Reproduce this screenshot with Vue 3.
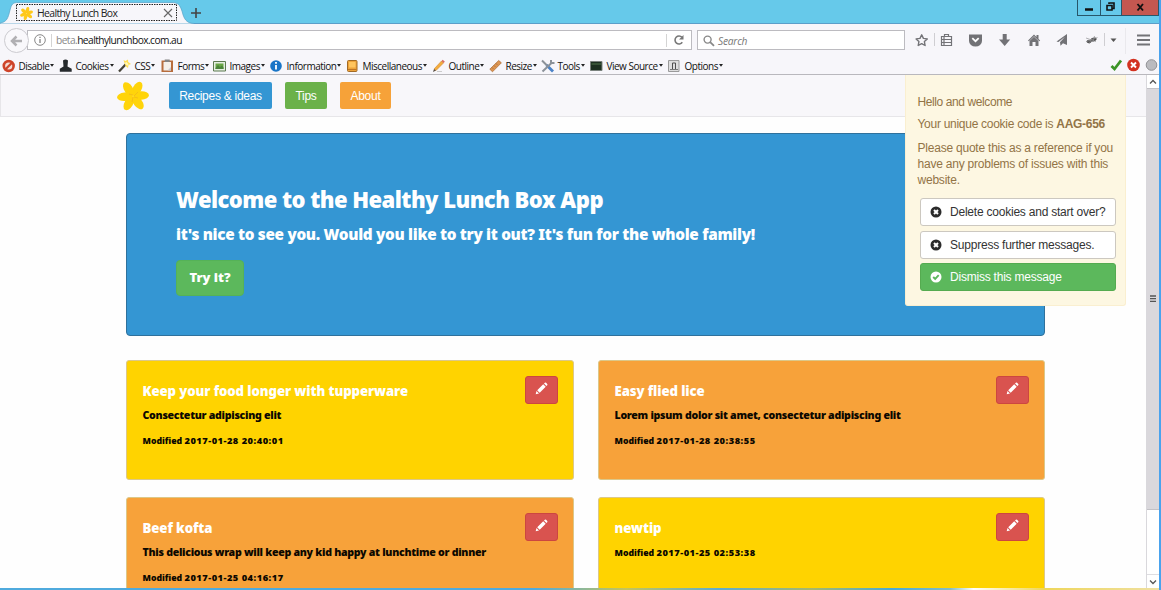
<script setup>
const tools = [
  { label: 'Disable', icon: 'disable' },
  { label: 'Cookies', icon: 'cookies' },
  { label: 'CSS', icon: 'css' },
  { label: 'Forms', icon: 'forms' },
  { label: 'Images', icon: 'images' },
  { label: 'Information', icon: 'info' },
  { label: 'Miscellaneous', icon: 'misc' },
  { label: 'Outline', icon: 'outline' },
  { label: 'Resize', icon: 'resize' },
  { label: 'Tools', icon: 'tools' },
  { label: 'View Source', icon: 'source' },
  { label: 'Options', icon: 'options' },
]
const cards = [
  { title: 'Keep your food longer with tupperware', text: 'Consectetur adipiscing elit', date: '2017-01-28 20:40:01', tone: 'yellow' },
  { title: 'Easy flied lice', text: 'Lorem ipsum dolor sit amet, consectetur adipiscing elit', date: '2017-01-28 20:38:55', tone: 'orange' },
  { title: 'Beef kofta', text: 'This delicious wrap will keep any kid happy at lunchtime or dinner', date: '2017-01-25 04:16:17', tone: 'orange' },
  { title: 'newtip', text: '', date: '2017-01-25 02:53:38', tone: 'yellow' },
]
const petals = [-75, -18, 38, 105, 160, 222]
</script>

<template>
  <div class="window">
    <header class="titlebar">
      <svg class="tab-shape" width="196" height="24" viewBox="0 0 196 24">
        <path d="M0 24V23C7 22 8 18 10 10C11.500 4 13 2.500 18 2.500H172C178 2.500 180 5 182 11C184 19 186 23 194 23.500V24Z" fill="#f7f6fa" stroke="#5aa7cb" stroke-width=".8" />
        <rect x="16.500" y="4.500" width="160" height="16" fill="none" stroke="#222" stroke-dasharray="1.500 1" />
      </svg>
      <div class="tab">
        <svg class="tab-flower" width="13" height="13" viewBox="0 0 32 32">
          <ellipse v-for="a in petals" :key="a" cx="16" cy="7.500" rx="4.200" ry="8" fill="#ffc91a" :transform="`rotate(${a + 90} 16 16)`" />
        </svg>
        <span class="tab-title">Healthy Lunch Box</span>
        <svg width="10" height="10" viewBox="0 0 10 10"><path d="M1 1l8 8M9 1L1 9" stroke="#666" stroke-width="1.100" /></svg>
      </div>
      <svg class="new-tab" width="12" height="12" viewBox="0 0 12 12"><path d="M6 1v10M1 6h10" stroke="#444" stroke-width="1.600" /></svg>
      <div class="win-buttons">
        <span><svg width="22" height="15" viewBox="0 0 22 15"><path d="M7 9.500h8" stroke="#111" stroke-width="2.500" /></svg></span>
        <span><svg width="20" height="15" viewBox="0 0 20 15"><path d="M6 5.500h5v4.500h-5zM8 4V3h5v5.500h-1.500" fill="none" stroke="#111" stroke-width="1.600" /></svg></span>
        <span class="close"><svg width="36" height="15" viewBox="0 0 36 15"><path d="M15.500 4l5.500 6.500M21 4l-5.500 6.500" stroke="#111" stroke-width="1.900" /></svg></span>
      </div>
    </header>

    <div class="navrow">
      <div class="back"><svg width="13" height="12" viewBox="0 0 13 12"><path d="M12 6H2M6.500 1.500L2 6l4.500 4.500" fill="none" stroke="#b1b0b3" stroke-width="2.500" /></svg></div>
      <div class="urlbar">
        <svg class="ident" width="12" height="12" viewBox="0 0 12 12"><circle cx="6" cy="6" r="5.300" fill="none" stroke="#888" /><path d="M6 5v4M6 2.700v1.300" stroke="#777" stroke-width="1.200" /></svg>
        <i class="sep"></i>
        <span class="url"><em>beta.</em>healthylunchbox.com.au</span>
        <i class="sep"></i>
        <svg class="reload" width="12" height="12" viewBox="0 0 12 12"><path d="M9.300 8.300A4 4 0 1 1 9 3.300" fill="none" stroke="#777" stroke-width="1.600" /><path d="M10.500 1v4.500H6z" fill="#777" /></svg>
      </div>
      <div class="searchbar">
        <svg width="12" height="12" viewBox="0 0 12 12"><circle cx="4.600" cy="4.600" r="3.500" fill="none" stroke="#888" stroke-width="1.400" /><path d="M7.200 7.200l3.800 3.600" stroke="#888" stroke-width="1.800" /></svg>
        <span>Search</span>
      </div>
      <svg class="actions" width="255" height="32" viewBox="0 0 255 32" fill="#727276">
        <path d="M16.700 10.800l1.700 3.600 3.900.5-2.900 2.700.7 3.900-3.400-1.900-3.500 1.900.7-3.900-2.800-2.700 3.900-.5z" fill="none" stroke="#737377" stroke-width="1.400" stroke-linejoin="round" />
        <path d="M29.500 9v13M199.500 9v13" stroke="#cfced2" />
        <path d="M36.500 12.500h10v9h-10zM39.500 12v-1.500h4V12M36 15.500h11M36 18.500h11M39 13v8" fill="none" stroke="#737377" stroke-width="1.200" />
        <path d="M64 10.500h13V17a6.500 5.500 0 0 1-13 0z" /><path d="M67.300 14.200l3.200 3 3.200-3" fill="none" stroke="#fff" stroke-width="1.800" />
        <path d="M97.700 10h4v5.500h3.500L99.700 22l-5.700-6.500h3.700z" />
        <path d="M123 16.500l6-6 2.500 2.400V11h2v3.900l1.700 1.600-.9.800-5.300-5.100-5.200 5.100zM124.500 17l4.500-4.300 4.500 4.300v5h-3v-4h-3v4h-3z" />
        <path d="M151.500 17.500L162 10v11l-4-1.800-2.500 2.500-.5-3.500 5-5.500-6.500 5.300z" />
        <ellipse cx="188.500" cy="15.500" rx="3.200" ry="1.800" fill="#4a4a4a" transform="rotate(-20 188.500 15.500)" /><ellipse cx="184" cy="17.500" rx="2.500" ry="1.800" fill="#555" /><path d="M181 14l10 3.500M184 20l3-6M188 18l1.500-6M181.500 17.500l11-4" stroke="#909094" stroke-width=".7" />
        <path d="M205.500 14.500h6L208.500 18z" fill="#555" />
        <path d="M220.500 4v26" stroke="#eae9ed" />
        <path d="M232 11.500h13M232 16h13M232 20.500h13" stroke="#737377" stroke-width="2.200" />
      </svg>
    </div>

    <div class="devbar">
      <div class="tools">
        <div v-for="t in tools" :key="t.label" class="tool">
          <svg width="14" height="14" viewBox="0 0 14 14">
            <g v-if="t.icon === 'disable'"><circle cx="6.700" cy="7" r="4.900" fill="#f3dcd5" stroke="#ce4429" stroke-width="2.600" /><path d="M3.500 10.300l6.500-6.500" stroke="#ce4429" stroke-width="2.300" /></g>
            <path v-else-if="t.icon === 'cookies'" d="M4 1.500q2.500-2 5 0L8.500 7.500l4.200 2.300v3H.8v-3l3.700-2.300z" fill="#262a2d" />
            <g v-else-if="t.icon === 'css'"><path d="M1 12.500l8-8.500" stroke="#454338" stroke-width="2.300" /><path d="M5.500 1l2 1L10 .5l.2 2.500L13 5l-2.500 1L10 9 7.500 7z" fill="#ffdf54" /><path d="M7.500 3.500l2.500 2.500" stroke="#fff7b5" stroke-width="2" /></g>
            <g v-else-if="t.icon === 'forms'"><path d="M.5 1.500h11.500V13H.5z" fill="#b76d3d" /><path d="M2.500 3h7.500v8.500H2.500z" fill="#f4efe9" /><path d="M3.700.5h5v2.500h-5z" fill="#858585" /><path d="M6.500 11.500l3.500-3.500v3.500z" fill="#c9c9d1" /></g>
            <g v-else-if="t.icon === 'images'"><path d="M.5 2.500h12v9.500H.5z" fill="#e5eee1" stroke="#5d7a50" /><path d="M2.500 4.500h8v5.500h-8z" fill="#68a545" /><path d="M2.500 9l2.500-3 2 2 2-1.500 1.500 2V10h-8z" fill="#4a8439" /></g>
            <g v-else-if="t.icon === 'info'"><circle cx="6" cy="7" r="5.800" fill="#1975c7" /><path d="M6 6v4.500M6 3v1.700" stroke="#fff" stroke-width="1.800" /></g>
            <g v-else-if="t.icon === 'misc'"><rect x="1.500" y="1.500" width="9.500" height="11" rx="1" fill="#eda33a" stroke="#a26a24" /><path d="M3 3h6.500v5.500H3z" fill="#ffc55e" /><path d="M2 10.500h8.500" stroke="#bd7423" /></g>
            <g v-else-if="t.icon === 'outline'"><path d="M2 10L9.500 2l2 2L4 11.500z" fill="#f4ad3c" stroke="#cb8738" stroke-width=".6" /><path d="M9.500 2l1.200-1.300 2.200 2L11.500 4z" fill="#d96b5e" /><path d="M2 10l-1 3 3-1.500z" fill="#554b40" /><path d="M5 12.500h5" stroke="#ccc" /></g>
            <g v-else-if="t.icon === 'resize'"><path d="M.8 10.200L9.700 1.500l2.700 2.300-8.900 9z" fill="#dd9551" stroke="#a96831" stroke-width=".7" /><path d="M3 8.500L4.200 9.700M5 6.500l1.200 1.200M7 4.500l1.200 1.200" stroke="#91592d" stroke-width=".7" /></g>
            <g v-else-if="t.icon === 'tools'"><path d="M5.500 6l6.500 6.500" stroke="#4b82c7" stroke-width="2.800" /><path d="M1.500 12.500L10.500 4M1 1.500l5 5M10 1v3h3.500" fill="none" stroke="#8c9299" stroke-width="2" /></g>
            <g v-else-if="t.icon === 'source'"><path d="M.5 2.500h11.500v9H.5z" fill="#1c3020" stroke="#7a827d" /><path d="M1.500 4h9.500v2H1.500z" fill="#365235" /></g>
            <g v-else><path d="M.5 1.500h10.500v11H.5z" fill="#dedede" stroke="#9a9a9a" /><path d="M4.500 10V4h3v6" fill="none" stroke="#4f4f4f" /><path d="M2 10.500h8" stroke="#777" /></g>
          </svg>
          <span>{{ t.label }}</span>
          <svg class="caret" width="4" height="3" viewBox="0 0 4 3"><path d="M0 0h4L2 2.700z" fill="#222" /></svg>
        </div>
      </div>
      <svg class="status" width="50" height="14" viewBox="0 0 50 14">
        <path d="M1.500 8l3 3 6.500-8.500" fill="none" stroke="#3c9427" stroke-width="2.800" />
        <circle cx="23.500" cy="7" r="6.300" fill="#d33221" /><path d="M21 4.500l5 5M26 4.500l-5 5" stroke="#fff" stroke-width="1.900" />
        <circle cx="41.500" cy="7" r="5.300" fill="#bbbbbf" stroke="#929296" />
      </svg>
    </div>

    <div class="view">
      <main class="page">
        <nav class="navbar">
          <svg class="brand" width="32" height="32" viewBox="0 0 32 32">
            <ellipse v-for="a in petals" :key="a" cx="16" cy="7.800" rx="4.300" ry="7.800" fill="#ffd40a" :transform="`rotate(${a + 105} 16 16)`" />
            <path d="M16 15l-4-1M17 16l4-4M16 17l-1 5M17 17l4 1" stroke="#f3b81b" stroke-width=".8" />
          </svg>
          <a class="nav-btn blue">Recipes &amp; ideas</a>
          <a class="nav-btn green">Tips</a>
          <a class="nav-btn amber">About</a>
        </nav>

        <section class="hero">
          <h1>Welcome to the Healthy Lunch Box App</h1>
          <p>it's nice to see you. Would you like to try it out? It's fun for the whole family!</p>
          <button class="try">Try it?</button>
        </section>

        <section class="cards">
          <article v-for="c in cards" :key="c.title" class="card" :class="c.tone">
            <div class="copy">
              <h2>{{ c.title }}</h2>
              <p v-if="c.text">{{ c.text }}</p>
              <small>Modified <b>{{ c.date }}</b></small>
            </div>
            <button class="edit">
              <svg width="13" height="13" viewBox="0 0 13 13" fill="#fff"><path d="M.7 12.300l.8-3.300 2.500 2.500zM2.200 8.300l6-6 2.500 2.500-6 6zM9 1.600l.8-.8q.7-.6 1.300 0l1.100 1.100q.6.600 0 1.300l-.8.800z" /></svg>
            </button>
          </article>
        </section>
      </main>

      <div class="scrollbar">
        <span class="arrow"><svg width="8" height="6" viewBox="0 0 8 6"><path d="M1 4.500l3-3 3 3" fill="none" stroke="#555" stroke-width="1.300" /></svg></span>
        <span class="thumb"><svg width="6" height="8" viewBox="0 0 6 8"><path d="M0 1h6M0 3.700h6M0 6.400h6" stroke="#555" stroke-width="1.300" /></svg></span>
        <span class="track"></span>
        <span class="arrow down"><svg width="8" height="6" viewBox="0 0 8 6"><path d="M1 1.500l3 3 3-3" fill="none" stroke="#555" stroke-width="1.300" /></svg></span>
      </div>

      <aside class="notice">
        <p class="hello">Hello and welcome</p>
        <p class="code">Your unique cookie code is <b>AAG-656</b></p>
        <p class="quote">Please quote this as a reference if you<br>have any problems of issues with this<br>website.</p>
        <button class="choice">
          <svg width="12" height="12" viewBox="0 0 12 12"><circle cx="6" cy="6" r="5.500" fill="#2b2b2b" /><path d="M4 4l4 4M8 4L4 8" stroke="#fff" stroke-width="2" /></svg>
          <span>Delete cookies and start over?</span>
        </button>
        <button class="choice">
          <svg width="12" height="12" viewBox="0 0 12 12"><circle cx="6" cy="6" r="5.500" fill="#2b2b2b" /><path d="M4 4l4 4M8 4L4 8" stroke="#fff" stroke-width="2" /></svg>
          <span>Suppress further messages.</span>
        </button>
        <button class="choice ok">
          <svg width="12" height="12" viewBox="0 0 12 12"><circle cx="6" cy="6" r="5.500" fill="#fff" /><path d="M3.200 6l2 2 3.500-3.800" fill="none" stroke="#5cb85c" stroke-width="1.900" /></svg>
          <span>Dismiss this message</span>
        </button>
      </aside>
    </div>
    <footer class="desktop-edge"></footer>
  </div>
</template>

<style>
html, body { margin: 0; overflow: hidden; }
</style>

<style scoped>
.window { width: 1161px; height: 590px; display: flex; flex-direction: column; background: #fefefe; position: relative; overflow: hidden; font-family: "Open Sans", "Noto Sans", sans-serif; box-sizing: border-box; border-right: 2px solid #4aa3ee; }
.window * { box-sizing: border-box; }
svg { display: block; flex: none; }
p, h1, h2 { margin: 0; }
button { font: inherit; padding: 0; }

.titlebar { height: 24px; flex: none; background: #66c9ea; border-bottom: 1px solid #5b9ec9; display: flex; position: relative; }
.tab-shape { position: absolute; left: 0; top: 0; }
.tab { position: relative; width: 190px; height: 24px; padding: 2px 0 0 20px; display: flex; align-items: center; font-size: 10.4px; color: #222; }
.tab-title { margin-left: 4px; width: 126px; white-space: nowrap; letter-spacing: -.6px; }
.new-tab { margin: 7px 0 0 0; position: relative; }
.win-buttons { margin-left: auto; display: flex; height: 16px; border: 1px solid #27566a; border-top: 0; }
.win-buttons span + span { border-left: 1px solid #27566a; }
.win-buttons .close { background: #c45750; }

.navrow { height: 32px; flex: none; background: #f7f6fa; display: flex; align-items: flex-start; }
.back { flex: none; width: 25px; height: 25px; margin: 4px 0 0 4px; border: 1px solid #cccbd0; border-radius: 50%; background: #f9f8fb; display: flex; align-items: center; justify-content: center; position: relative; z-index: 1; }
.urlbar { flex: none; width: 665px; height: 20px; margin: 6px 0 0 -2px; border: 1px solid #bcbbc0; background: #fff; display: flex; align-items: center; font-size: 10.2px; color: #111; }
.ident { margin-left: 6px; }
.sep { flex: none; width: 1px; height: 13px; background: #d4d4d4; margin-left: 5px; }
.url { flex: none; margin-left: 4px; width: 605px; white-space: nowrap; letter-spacing: -.55px; }
.url em { font-style: normal; color: #888; }
.reload { margin-left: 6px; }
.searchbar { flex: none; width: 208px; height: 20px; margin: 6px 0 0 5px; padding: 1px 0 0 5px; border: 1px solid #bcbbc0; background: #fff; display: flex; align-items: center; gap: 3px; font-size: 10.2px; letter-spacing: -.2px; font-style: italic; color: #777; }
.actions { height: 32px; }

.devbar { height: 19px; flex: none; background: #f7f6fa; border-bottom: 1px solid #b9b8bd; display: flex; justify-content: space-between; }
.tools { margin-left: 2px; display: grid; grid-template-columns: 57px 59px 43px 52px 57px 76px 86px 57px 52px 49px 78px 60px; }
.tool { display: flex; align-items: center; height: 19px; font-size: 10px; color: #111; white-space: nowrap; letter-spacing: -.5px; }
.tool span { margin-left: 2.5px; }
.caret { margin-left: 1px; }
.status { margin: 2px -1px 0 0; }

.view { flex: 1; min-height: 0; display: flex; position: relative; }
.page { flex: 1; min-width: 0; height: 513px; overflow: hidden; background: #fefefe; }
.navbar { height: 42px; background: #f8f7fa; border-bottom: 1px solid #e7e6e9; border-left: 1px solid #e7e6e9; display: flex; padding: 0 0 0 116px; font-family: "Liberation Sans", Arial, sans-serif; font-size: 12px; letter-spacing: -.27px; color: #fff; }
.brand { margin: 5px 0 0; }
.nav-btn { margin: 7px 0 0 13px; height: 27px; line-height: 28px; border-radius: 2px; text-align: center; }
.nav-btn.blue { width: 103px; margin-left: 20px; background: #3496d3; }
.green { width: 42px; background: #6bb14a; }
.amber { width: 51px; background: #f6a239; }

.hero, .cards { font-family: "Noto Sans", "Open Sans", sans-serif; font-weight: 900; }
.hero { width: 919px; height: 203px; margin: 16px 0 0 126px; padding: 48px 0 0 49px; border: 1px solid #2f719c; border-radius: 4px; background: #3496d3; color: #fff; }
.hero h1 { height: 36px; line-height: 35px; font-size: 22px; font-weight: 900; letter-spacing: -.54px; white-space: nowrap; }
.hero p { height: 33px; line-height: 33px; font-size: 15.3px; letter-spacing: -.31px; white-space: nowrap; }
.try { display: block; width: 68px; height: 36px; margin-top: 9px; border: 1px solid #55b257; border-radius: 4px; background: #5cb85c; color: #fff; font-size: 13px; font-weight: 900; padding-bottom: 2px; }

.cards { margin: 24px 0 0 126px; width: 919px; display: grid; grid-template-columns: 448px 447px; column-gap: 24px; row-gap: 17px; }
.card { height: 120px; padding: 15px 15px 0 15.5px; border: 1px solid #dcc889; border-radius: 3px; display: flex; justify-content: space-between; color: #0c0800; }
.yellow { background: #ffd300; }
.orange { background: #f7a23a; }
.card h2 { height: 31px; line-height: 31px; font-size: 13.2px; font-weight: 900; letter-spacing: -.1px; color: #fff; white-space: nowrap; }
.card p { height: 17px; line-height: 17px; font-size: 10.6px; letter-spacing: -.28px; white-space: nowrap; margin-bottom: 8px; }
.card small { display: block; height: 17px; line-height: 17px; font-size: 8.7px; white-space: nowrap; }
.card b { font-weight: 900; font-size: 9.3px; letter-spacing: .48px; }
.edit { width: 33px; height: 28px; border: 1px solid #cc4640; border-radius: 3px; background: #d9534f; display: flex; justify-content: center; padding-top: 5px; }

.scrollbar { width: 13px; height: 513px; border-left: 1px solid #d9d8dc; background: #fff; display: flex; flex-direction: column; }
.arrow { height: 14px; display: flex; align-items: center; justify-content: center; border-bottom: 1px solid #c2c1c6; }
.thumb { height: 421px; display: flex; align-items: center; justify-content: center; background: #dad8dc; border-bottom: 1px solid #c2c1c6; }
.track { flex: 1; }
.down { border-bottom: 0; border-top: 1px solid #dedde1; }

.notice { position: absolute; left: 905px; top: 0; width: 221px; height: 231px; padding: 18px 0 0 11.5px; background: #fdf7e2; border: 1px solid #faefd0; border-top: 0; border-radius: 0 0 3px 3px; font-family: "Liberation Sans", Arial, sans-serif; font-size: 12px; line-height: 16px; letter-spacing: -.22px; color: #927446; white-space: nowrap; }
.hello { margin-top: 1px; letter-spacing: -.4px; }
.code { margin-top: 6px; letter-spacing: -.28px; }
.quote { margin: 8px 0 10px; }
.choice { width: 196px; height: 28px; margin: 0 0 4.500px 2.500px; padding-left: 9px; display: flex; align-items: center; gap: 8px; border: 1px solid #ccc8c0; border-radius: 3px; background: #fff; color: #333; letter-spacing: -.22px; }
.ok { background: #5cb85c; border-color: #55ab50; color: #fff; }
.desktop-edge { height: 2px; flex: none; background: linear-gradient(90deg, #4faadd 0 46%, #c5c45c 54%, #5eabd0 62%, #a7b76c 70%, #48a9d7 77%, #86bcc4 82%, #fff 84%, #eed65a 90%, #efe0a1); }
</style>
